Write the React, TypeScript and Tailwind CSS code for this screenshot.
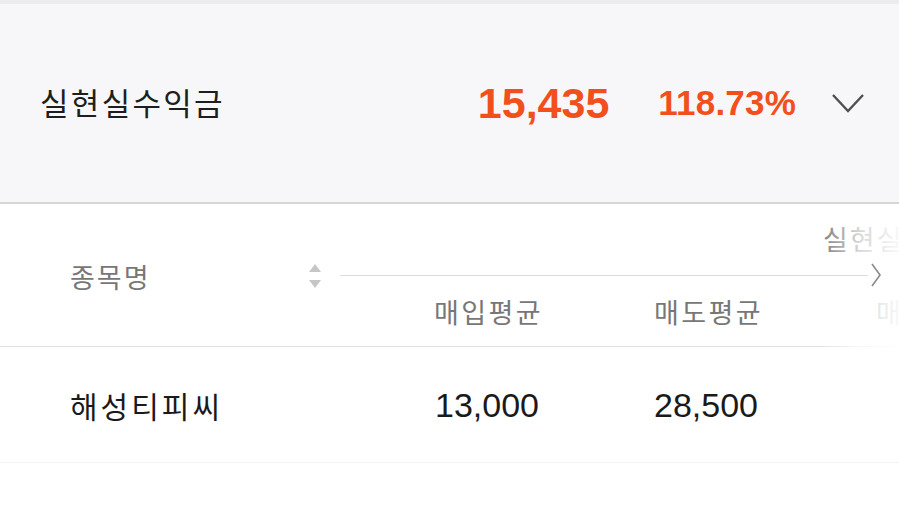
import React from "react";

const KR = { fontFamily: '"Noto Sans CJK KR", "Noto Sans", sans-serif' };
const NUM = { fontFamily: '"Liberation Sans", Arial, sans-serif' };

export default function App() {
  return (
    <div className="w-[899px] h-[509px] overflow-hidden bg-white relative" style={KR}>
      <div className="h-[4px] bg-[#ececee]" />
      {/* Summary panel */}
      <div className="h-[200px] bg-[#f7f7f9] border-b-2 border-[#d6d6d8] flex items-center pl-[40px] pr-[34px]">
        <div className="text-[31px] leading-[34px] tracking-[2.3px] text-[#1e1e1e] flex-1 pb-[2px]">실현실수익금</div>
        <div className="text-[43px] leading-[44px] font-bold text-[#f1501d]" style={NUM}>
          15,435
        </div>
        <div className="text-[35px] leading-[40px] font-bold text-[#f1501d] ml-[49px] tracking-[0.2px]" style={NUM}>
          118.73%
        </div>
        <svg width="34" height="22" viewBox="0 0 34 22" className="ml-[35px]" fill="none">
          <path d="M2 3 L17 19 L32 3" stroke="#505052" strokeWidth="2.4" />
        </svg>
      </div>

      {/* Table header */}
      <div className="relative h-[143px] border-b border-[#e2e2e2] flex">
        <div className="w-[340px] shrink-0 pl-[70px] pr-[18px] flex items-center justify-between pt-[3px]">
          <span className="text-[27px] leading-[30px] tracking-[2px] text-[#777]">종목명</span>
          <svg width="14" height="24" viewBox="0 0 14 24" className="mb-[2px]">
            <path d="M7 0 L13 8 L1 8 Z" fill="#c6c6c6" />
            <path d="M1 16 L13 16 L7 24 Z" fill="#c6c6c6" />
          </svg>
        </div>
        <div className="flex-1 flex flex-col min-w-0">
          <div className="h-[58px] pt-[20px] pl-[483px] whitespace-nowrap">
            <span className="text-[27px] leading-[30px] tracking-[2px] text-[#777]">실현실수익금</span>
          </div>
          <div className="h-[26px] flex items-center relative z-10">
            <div className="h-px w-[528px] shrink-0 bg-[#dcdcdc]" />
            <svg width="12" height="26" viewBox="0 0 12 26" className="ml-[2px] shrink-0" fill="none">
              <path d="M2 2 L10 13 L2 24" stroke="#8a8a8a" strokeWidth="1.6" />
            </svg>
          </div>
          <div className="flex pl-[94px] pt-[9px] whitespace-nowrap">
            <span className="w-[220px] shrink-0 text-[27px] leading-[30px] tracking-[2.4px] text-[#777]">매입평균</span>
            <span className="w-[222px] shrink-0 text-[27px] leading-[30px] tracking-[2.4px] text-[#777]">매도평균</span>
            <span className="shrink-0 text-[27px] leading-[30px] tracking-[2.4px] text-[#777]">매도일자</span>
          </div>
        </div>
        <div className="absolute top-0 right-0 h-[144px] w-[80px] bg-gradient-to-r from-white/0 via-white/70 to-white/95 pointer-events-none" />
      </div>

      {/* Row */}
      <div className="h-[116px] border-b border-[#f3f3f3] flex items-center pl-[70px] pt-[1px] whitespace-nowrap">
        <span className="w-[365px] shrink-0 text-[30px] leading-[34px] tracking-[3px] text-[#1a1a1a]">해성티피씨</span>
        <span className="w-[219px] shrink-0 text-[34px] leading-[36px] text-[#1a1a1a]" style={NUM}>13,000</span>
        <span className="shrink-0 text-[34px] leading-[36px] text-[#1a1a1a]" style={NUM}>28,500</span>
      </div>
    </div>
  );
}
